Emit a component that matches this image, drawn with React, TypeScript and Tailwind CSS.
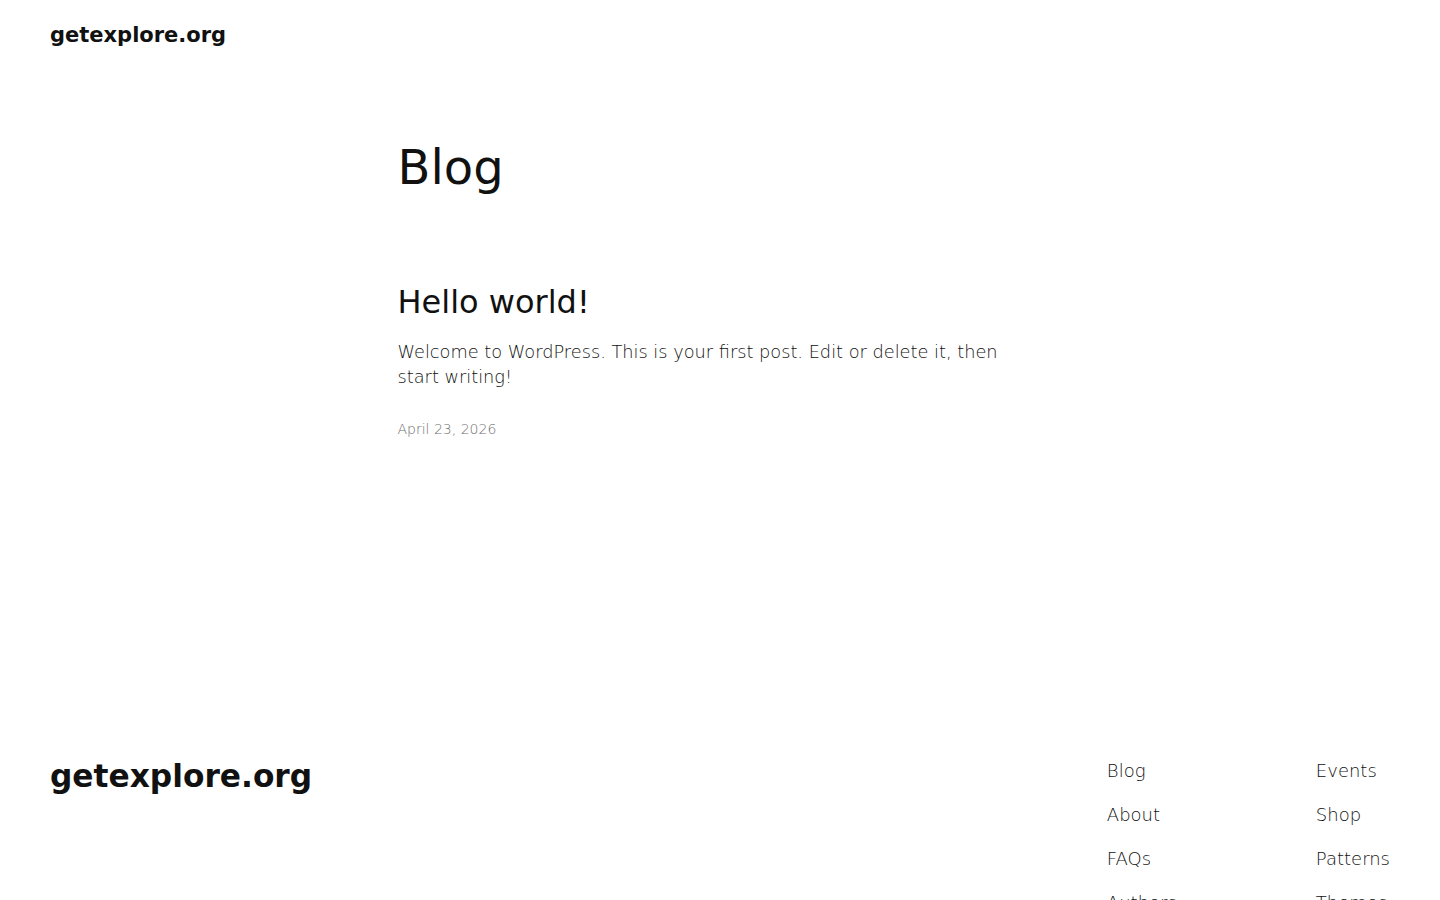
const footerCols = [
  ["Blog", "About", "FAQs", "Authors"],
  ["Events", "Shop", "Patterns", "Themes"],
];

export default function App() {
  return (
    <div className="min-h-screen overflow-hidden bg-white font-['DejaVu_Sans',sans-serif] text-[#111111]">
      {/* Header */}
      <header className="flex h-[70px] items-center px-[50px]">
        <a href="#" className="text-[21px] font-bold leading-none">
          getexplore.org
        </a>
      </header>

      {/* Main */}
      <main className="mx-auto w-[645px]">
        <h1 className="mt-[70px] text-[48px] font-normal leading-[1.125]">Blog</h1>

        <article className="mt-[90px]">
          <h2 className="text-[32px] font-normal leading-[1.125]">
            <a href="#">Hello world!</a>
          </h2>
          <p className="mt-[20px] text-[17.75px] font-light leading-[25px] text-[#111111]">
            Welcome to WordPress. This is your first post. Edit or delete it, then start writing!
          </p>
          <div className="mt-[30px] text-[14px] font-light leading-[1.4] text-[#6f6f6f]">
            April 23, 2026
          </div>
        </article>
      </main>

      {/* Footer */}
      <footer className="mt-[318px] flex items-start justify-between px-[50px]">
        <a href="#" className="text-[31.25px] font-bold leading-[1.2]">
          getexplore.org
        </a>
        <nav className="flex">
          {footerCols.map((col, i) => (
            <ul key={i} className={i === 0 ? "flex w-[209px] flex-col gap-[19px]" : "flex flex-col gap-[19px]"}>
              {col.map((item) => (
                <li key={item} className="text-[18px] font-light leading-[25px]">
                  <a href="#">{item}</a>
                </li>
              ))}
            </ul>
          ))}
        </nav>
      </footer>
    </div>
  );
}
